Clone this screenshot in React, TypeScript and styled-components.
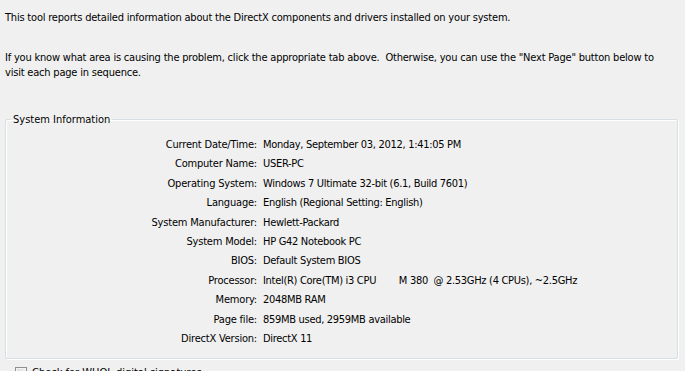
import React from "react";
import styled, { createGlobalStyle } from "styled-components";

const Global = createGlobalStyle`
  html, body { margin: 0; padding: 0; background: #f0f0f0; overflow: hidden; }
  body { font-family: "DejaVu Sans", "Liberation Sans", sans-serif; }
`;

const Page = styled.div`
  width: 685px;
  height: 371px;
  box-sizing: border-box;
  padding: 10px 0 0 5px;
  background: #f0f0f0;
  color: #000;
  font-family: "DejaVu Sans Condensed", "DejaVu Sans", sans-serif;
  font-size: 11px;
  display: flex;
  flex-direction: column;
  overflow: hidden;
`;

const Intro = styled.p<{ $gap?: number }>`
  margin: 0 0 ${(p) => p.$gap ?? 0}px 0;
  line-height: 15px;
  width: 662px;
  letter-spacing: -0.2px;
`;

const Group = styled.fieldset`
  margin: 0 7px 0 0;
  padding: 9px 0 10px 0;
  border: 1px solid #d5dfe5;
  box-shadow: inset 1px 1px 0 #fff, 1px 1px 0 #fff;
  border-radius: 2px;
  min-width: 0;
`;

const Legend = styled.legend`
  padding: 0 2px;
  margin-left: 5px;
  line-height: 13px;
`;

const Grid = styled.div`
  display: grid;
  grid-template-columns: 251px 1fr;
  column-gap: 6px;
  row-gap: 0;
`;

const Label = styled.div`
  text-align: right;
  line-height: 19.4px;
  white-space: nowrap;
  letter-spacing: -0.2px;
`;

const Value = styled.div`
  line-height: 19.4px;
  white-space: pre;
  letter-spacing: -0.3px;
`;

const CheckRow = styled.div`
  display: flex;
  align-items: center;
  gap: 5px;
  margin: 7px 0 0 10px;
  line-height: 13px;
`;

const Box = styled.span`
  width: 12px;
  height: 12px;
  box-sizing: border-box;
  border: 1px solid #8e8f8f;
  background: linear-gradient(135deg, #d8d8d8, #fff);
  box-shadow: inset 0 0 0 1px #f4f4f4;
  display: inline-block;
`;

const rows: [string, string][] = [
  ["Current Date/Time:", "Monday, September 03, 2012, 1:41:05 PM"],
  ["Computer Name:", "USER-PC"],
  ["Operating System:", "Windows 7 Ultimate 32-bit (6.1, Build 7601)"],
  ["Language:", "English (Regional Setting: English)"],
  ["System Manufacturer:", "Hewlett-Packard"],
  ["System Model:", "HP G42 Notebook PC"],
  ["BIOS:", "Default System BIOS"],
  ["Processor:", "Intel(R) Core(TM) i3 CPU        M 380  @ 2.53GHz (4 CPUs), ~2.5GHz"],
  ["Memory:", "2048MB RAM"],
  ["Page file:", "859MB used, 2959MB available"],
  ["DirectX Version:", "DirectX 11"],
];

export default function App() {
  return (
    <>
      <Global />
      <Page>
        <Intro $gap={25}>
          This tool reports detailed information about the DirectX components and drivers installed on your system.
        </Intro>
        <Intro $gap={33}>
          If you know what area is causing the problem, click the appropriate tab above.&nbsp; Otherwise, you can use the "Next Page" button below to visit each page in sequence.
        </Intro>
        <Group>
          <Legend>System Information</Legend>
          <Grid>
            {rows.map(([l, v]) => (
              <React.Fragment key={l}>
                <Label>{l}</Label>
                <Value>{v}</Value>
              </React.Fragment>
            ))}
          </Grid>
        </Group>
        <CheckRow>
          <Box />
          <span>Check for WHQL digital signatures</span>
        </CheckRow>
      </Page>
    </>
  );
}
